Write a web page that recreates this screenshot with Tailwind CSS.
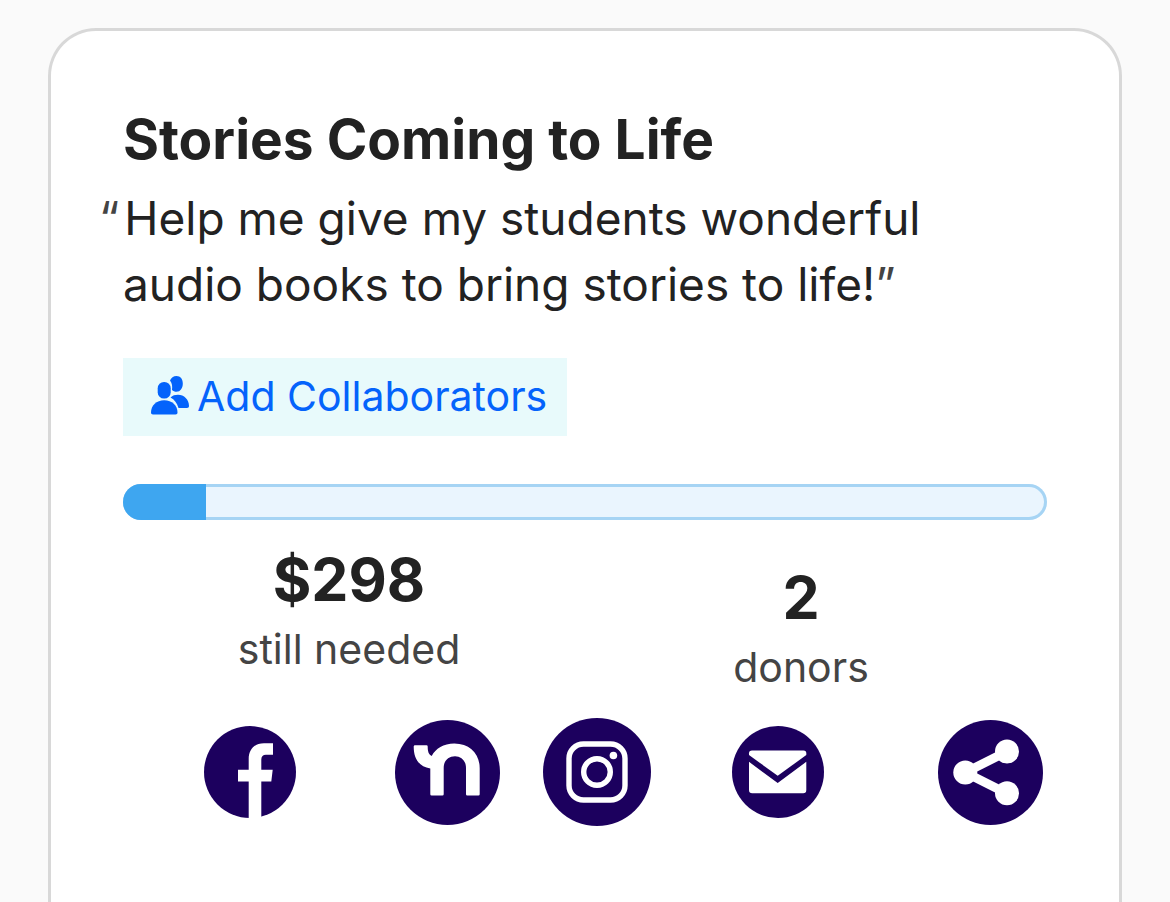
<!DOCTYPE html>
<html lang="en">
<head>
<meta charset="UTF-8">
<meta name="viewport" content="width=device-width, initial-scale=1.0">
<title>Stories Coming to Life</title>
<script src="https://cdn.jsdelivr.net/npm/@tailwindcss/browser@4"></script>
</head>
<body class="flex flex-col min-h-screen bg-[#fafafa] text-[#222] font-['Inter',sans-serif] px-12 pt-7">

<main class="grow bg-white border-[3px] border-b-0 border-[#d8d8d8] rounded-t-[48px] p-[72px]">
    <h1 class="text-[55px] leading-[72px] font-bold">Stories Coming to Life</h1>
    <p class="mt-[10px] text-[46px] leading-[66px] -indent-[24px]"><span class="text-[#444] mr-[5px]">“</span>Help me give my students wonderful<br class="hidden lg:block"> <span class="inline-block indent-0">audio books to bring stories to life!<span class="text-[#444]">”</span></span></p>

    <button type="button" class="mt-[41px] h-[78px] pl-7 pr-5 flex items-center gap-2 bg-[#e8fafb] text-[#0463fb] text-[41px] cursor-pointer">
        <svg class="w-[38px] h-[39px] mb-1" viewBox="0 0 38 39" fill="currentColor" aria-hidden="true">
            <path d="M19 4.500C20 2 22.500 0 25.500 0C29.500 0 31.800 3 31.800 7.500C31.800 12 29.500 15.800 25.500 15.800C23.800 15.800 22.200 15.200 21 14C21.400 10 21.300 7.500 19 4.500Z"/>
            <path d="M19.500 21.500C21.500 19.500 24 18.800 27 18.800C33 18.800 38 23.500 38 30C38 31.300 37.300 32 36 32H27.500C26 27 23.500 23.500 19.500 21.500Z"/>
            <rect x="6.700" y="6" width="13" height="16.500" rx="6.300"/>
            <path d="M0 36.500C0 29.500 5.500 24.300 13.200 24.300C21 24.300 26.500 29.500 26.500 36.500C26.500 37.800 25.800 38.500 24.500 38.500H2C.700 38.500 0 37.800 0 36.500Z"/>
        </svg>
        Add Collaborators
    </button>

    <div role="progressbar" aria-label="Funding progress" aria-valuenow="9" aria-valuemin="0" aria-valuemax="100" class="mt-12 h-9 rounded-full overflow-hidden bg-[#eaf5fe] shadow-[inset_0_0_0_3px_#a6d4f4]">
        <div class="h-full bg-[#3ea6f0]" style="width: 9%"></div>
    </div>

    <div class="mt-6 pr-5 grid grid-cols-2 text-center">
        <div>
            <div class="text-[59px] leading-[72px] font-bold">$298</div>
            <div class="text-[41px] leading-[66px] text-[#444]">still needed</div>
        </div>
        <div class="pt-[18px]">
            <div class="text-[59px] leading-[72px] font-bold">2</div>
            <div class="text-[41px] leading-[66px] text-[#444]">donors</div>
        </div>
    </div>

    <!-- Share links -->
    <nav aria-label="Share" class="mt-[18px] pl-[81px] flex items-center text-[#1c005e]">
        <a href="#" aria-label="Facebook" class="mr-[99px]">
            <svg class="size-[92px]" viewBox="0 0 92 92" aria-hidden="true">
                <circle cx="46" cy="46" r="46" fill="currentColor"/>
                <path fill="#fff" d="M44.700 92V55.500H34V43.800H44.700V33C44.700 23 51 17.200 60 17.200H69V28.800H62C59 28.800 57.300 30.500 57.300 33.500V43.800H68.700L67.300 55.500H57.300V92Z"/>
            </svg>
        </a>
        <a href="#" aria-label="Nextdoor" class="mr-[43px]">
            <svg class="size-[105px]" viewBox="0 0 105 105" aria-hidden="true">
                <circle cx="52.500" cy="52.500" r="52.500" fill="currentColor"/>
                <path fill="#fff" d="M20 25.200H31.500Q32.700 25.200 32.700 26.500C32.700 31 33.500 34.500 36.700 36C40.500 28.500 48.500 23.500 59.300 23.500C75 23.500 84.700 34 84.700 48.200V74.200Q84.700 75.500 83.400 75.500H72.300Q71 75.500 71 74.200V48C71 40.500 66 36.200 60 36.200C53.500 36.200 48.700 40.500 48.700 48V74.200Q48.700 75.500 47.400 75.500H36.600Q35.300 75.500 35.300 74.200V48.500C24 46.500 18.700 39 18.700 26.500Q18.700 25.200 20 25.200Z"/>
            </svg>
        </a>
        <a href="#" aria-label="Instagram" class="mr-[81px]">
            <svg class="size-[108px]" viewBox="0 0 108 108" aria-hidden="true">
                <circle cx="54" cy="54" r="54" fill="currentColor"/>
                <g fill="none" stroke="#fff" stroke-width="5.400">
                    <rect x="26" y="26" width="56" height="56" rx="14.500"/>
                    <circle cx="54" cy="54" r="13.300"/>
                </g>
                <circle cx="70.400" cy="37.500" r="3.800" fill="#fff"/>
            </svg>
        </a>
        <a href="#" aria-label="Email" class="mr-[114px]">
            <svg class="size-[92px]" viewBox="0 0 92 92" aria-hidden="true">
                <circle cx="46" cy="46" r="46" fill="currentColor"/>
                <path fill="#fff" d="M20 24.500H71.500Q74.300 24.500 74.300 27.300V29L45.700 49.800L17 29V27.300Q17 24.500 20 24.500Z"/>
                <path fill="#fff" d="M17 35.800L45.700 57L74.300 35.800V64Q74.300 67.200 71.200 67.200H20.200Q17 67.200 17 64Z"/>
            </svg>
        </a>
        <a href="#" aria-label="More ways to share">
            <svg class="size-[105px]" viewBox="0 0 105 105" aria-hidden="true">
                <circle cx="52.500" cy="52.500" r="52.500" fill="currentColor"/>
                <path fill="none" stroke="#fff" stroke-width="9" d="M69 31.500L27.300 52.500L69 73.500"/>
                <g fill="#fff">
                    <circle cx="27.300" cy="52.500" r="12"/>
                    <circle cx="69" cy="31.500" r="12"/>
                    <circle cx="69" cy="73.300" r="12"/>
                </g>
            </svg>
        </a>
    </nav>
</main>

</body>
</html>
